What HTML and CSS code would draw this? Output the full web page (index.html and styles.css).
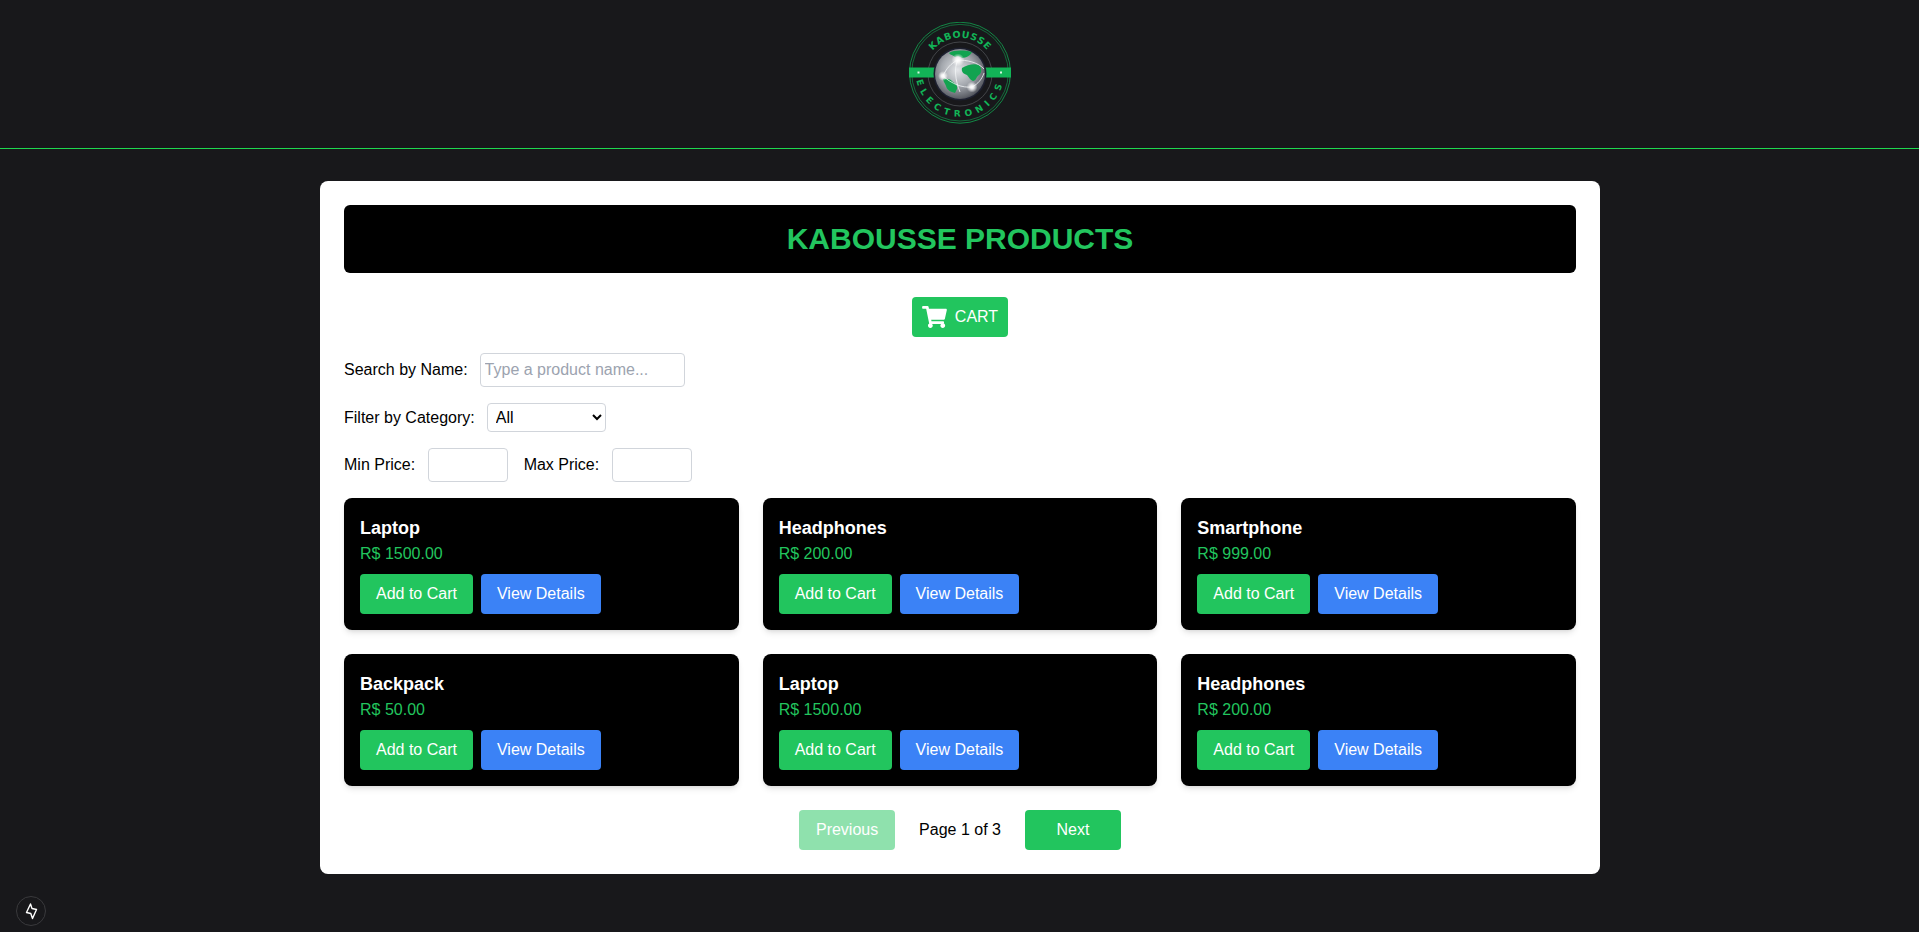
FILE: index.html
```html
<!DOCTYPE html>
<html lang="en">
<head>
    <meta charset="UTF-8">
    <meta name="viewport" content="width=device-width, initial-scale=1.0">
    <title>Kabousse Products</title>
    <link rel="stylesheet" href="styles.css">
</head>
<body>
    <header class="site-header">
        <svg class="logo" viewBox="0 0 104 104" aria-label="Kabousse Electronics logo">
            <defs>
                <radialGradient id="globe" cx="45%" cy="42%" r="65%">
                    <stop offset="0" stop-color="#e4e6e9"/>
                    <stop offset="0.5" stop-color="#a4a8ae"/>
                    <stop offset="0.85" stop-color="#5f626a"/>
                    <stop offset="1" stop-color="#34363f"/>
                </radialGradient>
                <radialGradient id="glow">
                    <stop offset="0" stop-color="#fff"/>
                    <stop offset="0.35" stop-color="#fff" stop-opacity="0.85"/>
                    <stop offset="1" stop-color="#fff" stop-opacity="0"/>
                </radialGradient>
                <path id="arc-top" d="M 17 50.700 A 35 35 0 0 1 87 50.700"/>
                <path id="arc-bottom" d="M 8 50.700 A 44 44 0 0 0 96 50.700"/>
            </defs>
            <circle cx="52" cy="50.700" r="50.500" fill="none" stroke="#12a350" stroke-width="0.8"/>
            <circle cx="52" cy="50.700" r="48.300" fill="none" stroke="#12a350" stroke-width="0.6"/>
            <circle cx="52" cy="52" r="32" fill="none" stroke="#55585c" stroke-width="0.7"/>
            <rect x="1" y="45.500" width="102" height="10" fill="#12b457"/>
            <rect x="9.500" y="49.500" width="2" height="2" fill="#d8f5e2"/>
            <rect x="92" y="49.500" width="2" height="2" fill="#d8f5e2"/>
            <circle cx="52" cy="52" r="26.500" fill="#1d2030"/>
            <circle cx="52" cy="52" r="25" fill="url(#globe)"/>
            <path class="land" d="M54 46c5-3 12-5 17-3 3 3 3 8 0 10-3 2-3 6-6 6-3-1-4-4-6-6-3-1-6-3-5-7zM41 31c5-3 14-3 23-1-1 3-6 6-10 6-3-2-5-2-7-1-2-2-5-2-6-4zM35 57c4-1 8 0 10 3 3 2 5 4 4 7l-2 4c-4-1-8-3-9-7-1-3-3-5-3-7z"/>
            <path d="M50 38C58 38 70 40 76 47M35 54C44 62 54 66 64 65M50 38C43 41 38 47 35 54M64 65C70 62 74 57 76 51M50 38C46 45 47 58 52 70" fill="none" stroke="#f4f6f8" stroke-width="0.8"/>
            <circle cx="50" cy="38" r="6.500" fill="url(#glow)"/>
            <circle cx="35" cy="54" r="5" fill="url(#glow)"/>
            <circle cx="64" cy="65" r="5.500" fill="url(#glow)"/>
            <text class="logo-brand"><textPath href="#arc-top" startOffset="50%" text-anchor="middle">KABOUSSE</textPath></text>
            <text class="logo-sub"><textPath href="#arc-bottom" startOffset="50%" text-anchor="middle">ELECTRONICS</textPath></text>
        </svg>
    </header>

    <main class="panel">
        <h1 class="panel-title">KABOUSSE PRODUCTS</h1>

        <div class="cart-row">
            <button type="button" class="btn btn-green cart-btn">
                <svg class="cart-icon" viewBox="0 0 576 512"><path fill="currentColor" d="M528.120 301.319l47.273-208C578.806 78.301 567.391 64 551.990 64H159.208l-9.166-44.810C147.758 8.021 137.930 0 126.529 0H24C10.745 0 0 10.745 0 24v16c0 13.255 10.745 24 24 24h69.883l70.248 343.435C147.325 417.100 136 435.222 136 456c0 30.928 25.072 56 56 56s56-25.072 56-56c0-15.674-6.447-29.835-16.824-40h209.647C430.447 426.165 424 440.326 424 456c0 30.928 25.072 56 56 56s56-25.072 56-56c0-22.172-12.888-41.332-31.579-50.405l5.517-24.276c3.413-15.018-8.002-29.319-23.403-29.319H218.117l-6.545-32h293.145c11.206 0 20.920-7.754 23.403-18.681z"/></svg>
                CART
            </button>
        </div>

        <div class="filter-row">
            <label for="search">Search by Name:</label>
            <input type="text" id="search" class="search-input" placeholder="Type a product name...">
        </div>
        <div class="filter-row">
            <label for="category">Filter by Category:</label>
            <select id="category" class="category-select">
                <option>All</option>
            </select>
        </div>
        <div class="filter-row filter-price">
            <label for="min-price">Min Price:</label>
            <input type="text" id="min-price" class="price-input">
            <label for="max-price">Max Price:</label>
            <input type="text" id="max-price" class="price-input">
        </div>

        <div class="product-grid">
            <div class="product-card">
                <h2>Laptop</h2>
                <p class="price">R$ 1500.00</p>
                <div class="card-actions">
                    <button type="button" class="btn btn-green">Add to Cart</button>
                    <button type="button" class="btn btn-blue">View Details</button>
                </div>
            </div>
            <div class="product-card">
                <h2>Headphones</h2>
                <p class="price">R$ 200.00</p>
                <div class="card-actions">
                    <button type="button" class="btn btn-green">Add to Cart</button>
                    <button type="button" class="btn btn-blue">View Details</button>
                </div>
            </div>
            <div class="product-card">
                <h2>Smartphone</h2>
                <p class="price">R$ 999.00</p>
                <div class="card-actions">
                    <button type="button" class="btn btn-green">Add to Cart</button>
                    <button type="button" class="btn btn-blue">View Details</button>
                </div>
            </div>
            <div class="product-card">
                <h2>Backpack</h2>
                <p class="price">R$ 50.00</p>
                <div class="card-actions">
                    <button type="button" class="btn btn-green">Add to Cart</button>
                    <button type="button" class="btn btn-blue">View Details</button>
                </div>
            </div>
            <div class="product-card">
                <h2>Laptop</h2>
                <p class="price">R$ 1500.00</p>
                <div class="card-actions">
                    <button type="button" class="btn btn-green">Add to Cart</button>
                    <button type="button" class="btn btn-blue">View Details</button>
                </div>
            </div>
            <div class="product-card">
                <h2>Headphones</h2>
                <p class="price">R$ 200.00</p>
                <div class="card-actions">
                    <button type="button" class="btn btn-green">Add to Cart</button>
                    <button type="button" class="btn btn-blue">View Details</button>
                </div>
            </div>
        </div>

        <div class="pagination">
            <button type="button" class="btn btn-green page-btn is-disabled">Previous</button>
            <span>Page 1 of 3</span>
            <button type="button" class="btn btn-green page-btn">Next</button>
        </div>
    </main>

    <button type="button" class="dev-badge" aria-label="Dev tools">
        <svg viewBox="0 0 16 18" width="16" height="18"><path fill="none" stroke="#fff" stroke-width="1.400" stroke-linejoin="round" d="M7.500 2 3.500 10.500 7.800 11.500 9.500 16.500 13.500 7.500 9 6.500Z"/></svg>
    </button>
</body>
</html>
```

FILE: styles.css
```css
/* Global Styles */
* {
    margin: 0;
    padding: 0;
    box-sizing: border-box;
}
body {
    font-family: 'Liberation Sans', Arial, sans-serif;
    font-size: 16px;
    line-height: 24px;
    background: #18181b;
    color: #000;
    min-height: 100vh;
}

/* Header */
.site-header {
    height: 149px;
    display: flex;
    justify-content: center;
    align-items: center;
    border-bottom: 1px solid #1ed84f;
}
.logo {
    width: 104px;
    height: 104px;
    margin-left: 1px;
    display: block;
}
.land {
    fill: #12a350;
}
.logo-brand {
    font: bold 9.500px 'DejaVu Sans', sans-serif;
    letter-spacing: 0.6px;
    fill: #12b457;
}
.logo-sub {
    font: bold 9px 'DejaVu Sans', sans-serif;
    letter-spacing: 4.800px;
    fill: #12b457;
}

/* Panel */
.panel {
    width: 1280px;
    margin: 32px 0 0 320px;
    padding: 24px;
    background: #fff;
    border-radius: 8px;
}
.panel-title {
    height: 68px;
    background: #000;
    color: #22c55e;
    border-radius: 6px;
    font-size: 30px;
    line-height: 68px;
    font-weight: bold;
    text-align: center;
    margin-bottom: 24px;
}

/* Buttons */
.btn {
    border: none;
    border-radius: 4px;
    color: #fff;
    font-family: inherit;
    font-size: 16px;
    line-height: 24px;
    padding: 8px 16px;
    cursor: pointer;
}
.btn-green {
    background: #22c55e;
}
.btn-blue {
    background: #3b82f6;
}
.cart-row {
    display: flex;
    justify-content: center;
    margin-bottom: 16px;
}
.cart-btn {
    display: flex;
    align-items: center;
    gap: 8px;
    padding: 8px 10px;
}
.cart-icon {
    width: 25px;
    height: 22px;
}

/* Filters */
.filter-row {
    display: flex;
    align-items: center;
    margin-bottom: 16px;
}
.filter-row label {
    margin-right: 12px;
}
.filter-row input, .filter-row select {
    font-family: inherit;
    font-size: 16px;
    border: 1px solid #d1d5db;
    border-radius: 4px;
    background: #fff;
    color: #000;
}
.search-input {
    width: 205px;
    height: 34px;
    padding: 4px;
}
.search-input::placeholder {
    color: #9ca3af;
}
.category-select {
    width: 119px;
    height: 29px;
    padding: 0 4px;
}
.price-input {
    width: 80px;
    height: 34px;
    padding: 4px;
}
.filter-price label {
    margin-right: 12.500px;
}
.filter-price .price-input:nth-of-type(1) {
    margin-right: 16px;
}

/* Product grid */
.product-grid {
    display: grid;
    grid-template-columns: repeat(3, 1fr);
    gap: 24px;
}
.product-card {
    background: #000;
    color: #fff;
    padding: 16px;
    border-radius: 8px;
    box-shadow: 0 4px 6px -1px rgba(0, 0, 0, 0.1), 0 2px 4px -2px rgba(0, 0, 0, 0.1);
}
.product-card h2 {
    font-size: 18px;
    line-height: 28px;
    font-weight: bold;
}
.price {
    color: #22c55e;
}
.card-actions {
    display: flex;
    gap: 8px;
    margin-top: 8px;
}

/* Pagination */
.pagination {
    display: flex;
    justify-content: center;
    align-items: center;
    gap: 24px;
    margin-top: 24px;
}
.page-btn {
    width: 96px;
}
.is-disabled {
    opacity: 0.5;
}

/* Dev badge */
.dev-badge {
    position: fixed;
    left: 16px;
    bottom: 6px;
    width: 30px;
    height: 30px;
    border-radius: 50%;
    border: 1px solid #3a3a3d;
    background: #18181b;
    display: flex;
    align-items: center;
    justify-content: center;
}
```
